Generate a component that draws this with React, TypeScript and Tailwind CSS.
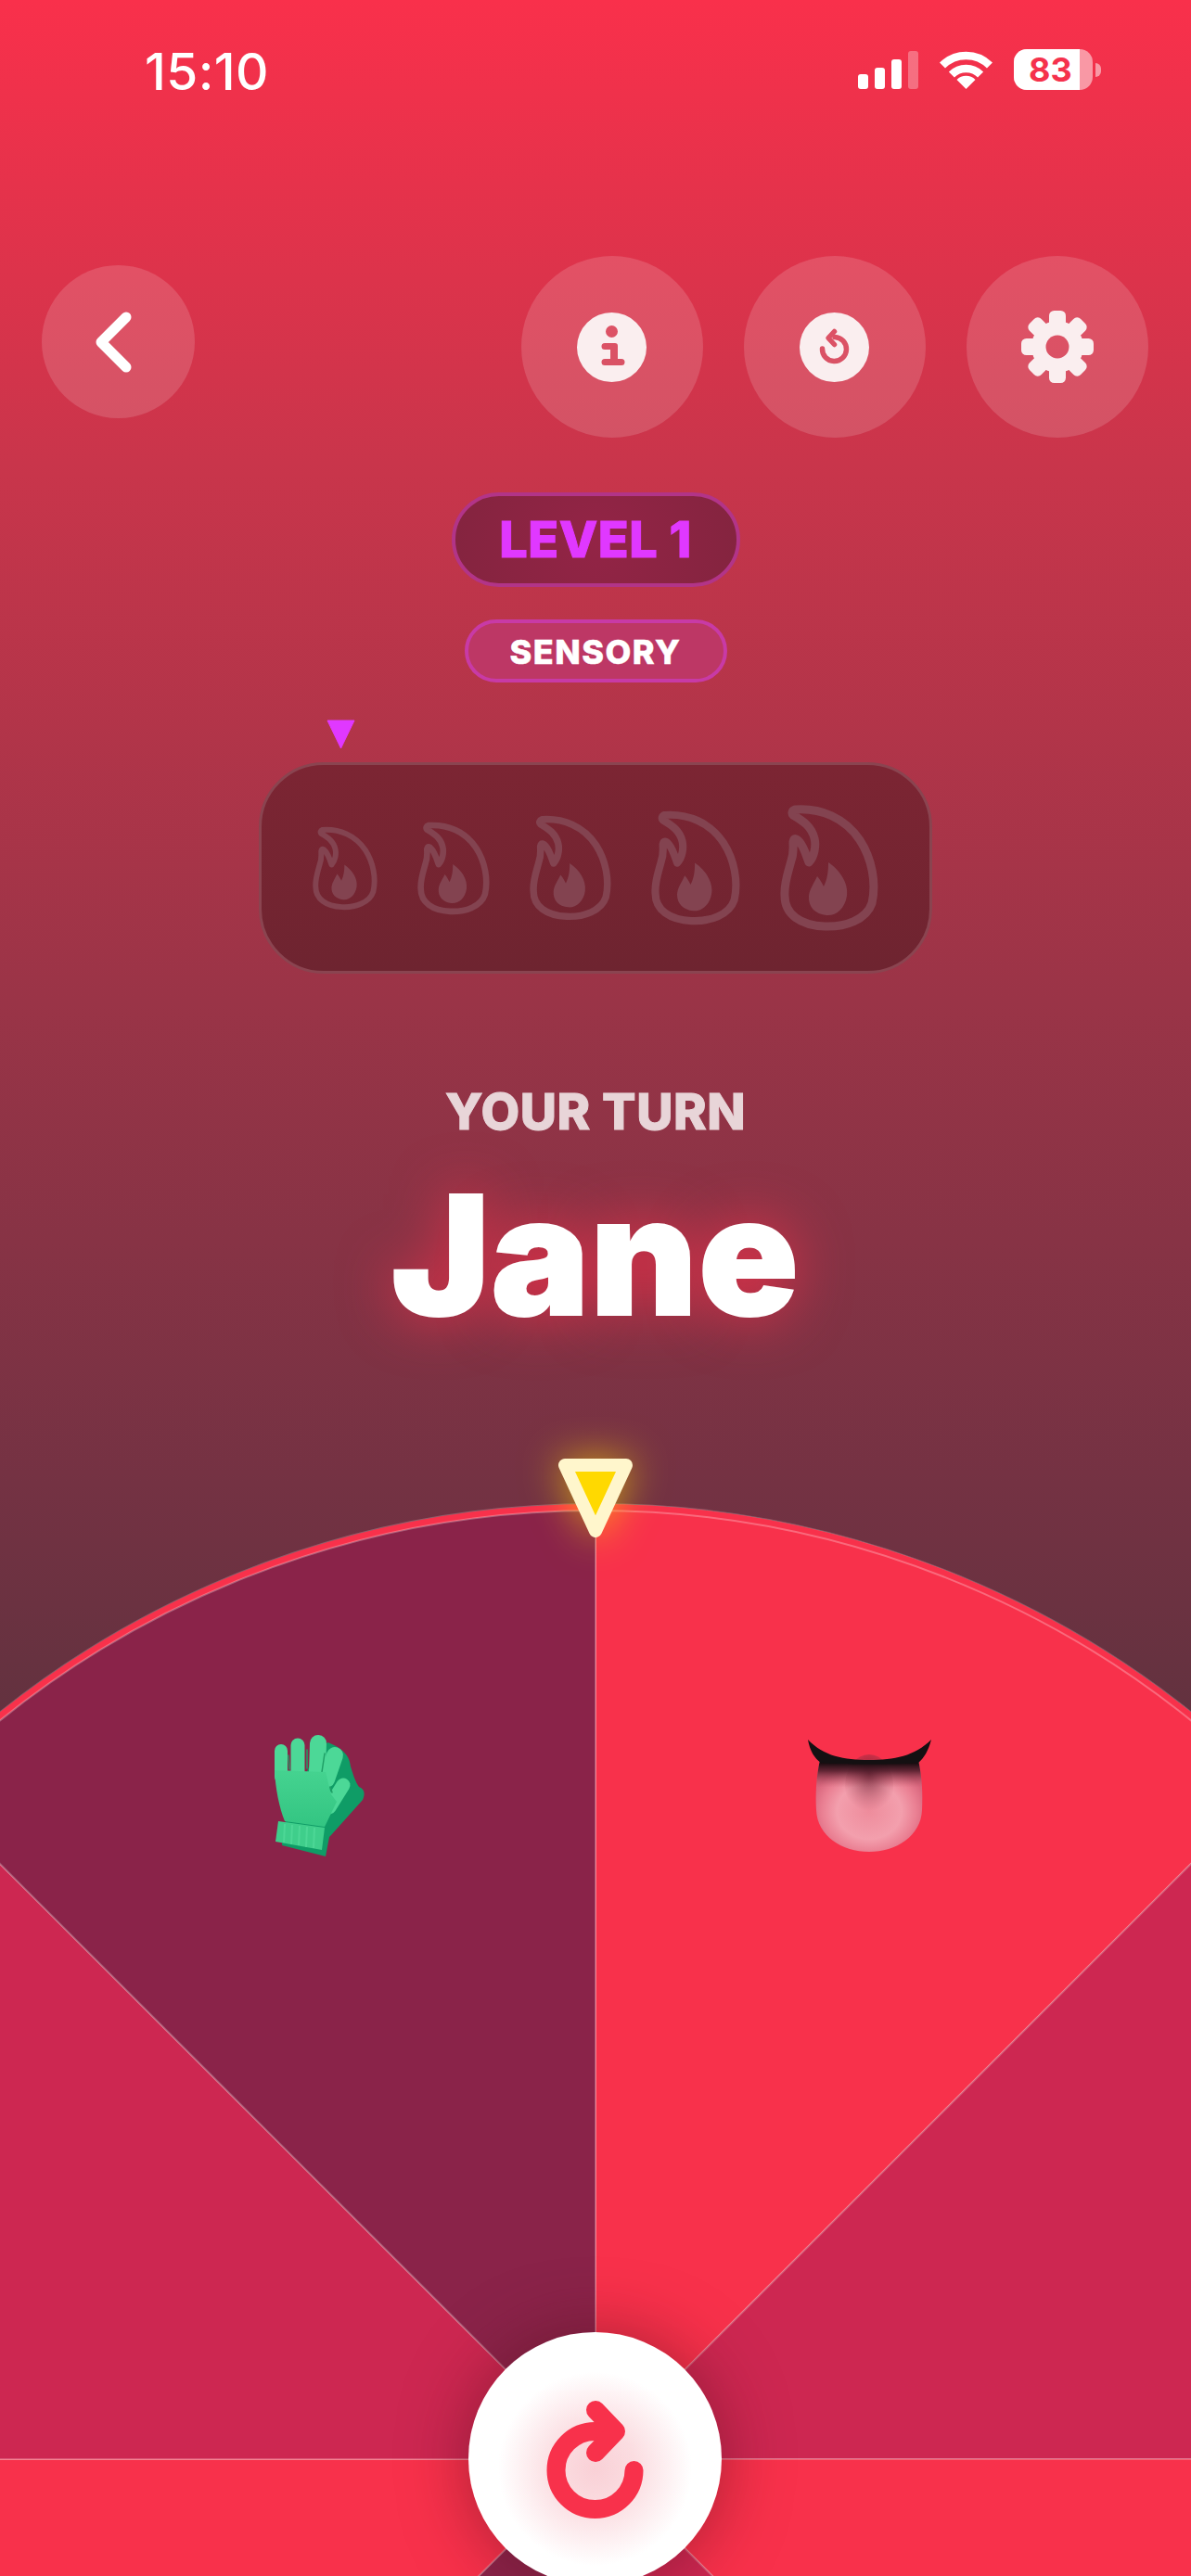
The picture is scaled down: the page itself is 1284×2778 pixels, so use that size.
import { ReactNode } from "react";

const font = "font-['Inter',sans-serif]";

function StatusBar() {
  return (
    <div className="h-[276px] pl-[156px] pr-[97px] pt-[46px] flex items-start justify-between text-white">
      <span className={`${font} font-medium text-[55px] leading-[62px] tracking-[0.4px]`}>15:10</span>
      <div className="flex items-start pt-[9px]">
        {/* signal */}
        <div className="flex items-end gap-[7px] h-[41px]">
          <div className="w-[11px] h-[16px] rounded-[3px] bg-white" />
          <div className="w-[11px] h-[23px] rounded-[3px] bg-white" />
          <div className="w-[11px] h-[32px] rounded-[3px] bg-white" />
          <div className="w-[11px] h-[41px] rounded-[3px] bg-white/30" />
        </div>
        {/* wifi */}
        <svg width="57" height="41" viewBox="0 0 57 41" className="ml-[23px]" fill="none" stroke="white" strokeWidth="8.5">
          <path d="M3 15.5 A36 36 0 0 1 54 15.5" />
          <path d="M12.9 25.6 A22 22 0 0 1 44.1 25.6" />
          <path d="M28.5 41 L18.5 31 A14 14 0 0 1 38.5 31 Z" fill="white" stroke="none" />
        </svg>
        {/* battery */}
        <div className="relative ml-[23px] -mt-[2px] w-[85px] h-[44px] rounded-[14px] bg-white/50 overflow-hidden">
          <div className="absolute left-0 top-0 bottom-0 w-[71px] bg-white" />
          <span className={`${font} absolute left-[16px] top-0 font-bold text-[36px] leading-[44px] text-[#f5314c]`}>83</span>
        </div>
        <div className="ml-[3px] mt-[13px] w-[6px] h-[15px] rounded-r-full bg-white/50" />
      </div>
    </div>
  );
}

function RoundButton({ children }: { children: ReactNode }) {
  return (
    <button className="w-[196px] h-[196px] rounded-full bg-white/15 flex items-center justify-center">
      {children}
    </button>
  );
}

function InfoIcon() {
  return (
    <svg width="75" height="75" viewBox="0 0 75 75" className="-ml-[2px]">
      <path
        fillRule="evenodd"
        fill="#faeeef"
        d="M37.5 0a37.5 37.5 0 1 0 0 75a37.5 37.5 0 1 0 0-75Z M37.5 14a6.5 6.5 0 1 1 0 13a6.5 6.5 0 1 1 0-13Z M30 33h11a3 3 0 0 1 3 3v14h4a3.5 3.5 0 0 1 0 7H30a3.5 3.5 0 0 1 0-7h6v-10h-6a3.5 3.5 0 0 1 0-7Z"
      />
    </svg>
  );
}

function ReplayIcon() {
  return (
    <svg width="75" height="75" viewBox="0 0 75 75" className="-ml-[2px]">
      <mask id="replay-hole">
        <rect width="75" height="75" fill="white" />
        <g fill="none" stroke="black" strokeWidth="5.5" strokeLinecap="round" strokeLinejoin="round">
          <path d="M24.5 39 A13 13 0 1 0 38 26.5" />
          <path d="M37.5 20.5 L31 27.5 L37.5 34.5" />
        </g>
      </mask>
      <circle cx="37.5" cy="37.5" r="37.5" fill="#faeeef" mask="url(#replay-hole)" />
    </svg>
  );
}

function GearIcon() {
  const teeth = [0, 45, 90, 135, 180, 225, 270, 315];
  return (
    <svg width="78" height="78" viewBox="0 0 78 78">
      <mask id="gear-hole">
        <rect width="78" height="78" fill="white" />
        <circle cx="39" cy="39" r="12.5" fill="black" />
      </mask>
      <g fill="#faeeef" mask="url(#gear-hole)">
        <circle cx="39" cy="39" r="28" />
        {teeth.map((a) => (
          <rect key={a} x="30" y="0" width="18" height="24" rx="5.5" transform={`rotate(${a} 39 39)`} />
        ))}
      </g>
    </svg>
  );
}

function Header() {
  return (
    <div className="flex items-start justify-between pl-[45px] pr-[46px]">
      <button className="mt-[10px] w-[165px] h-[165px] rounded-full bg-white/15">
        <svg width="165" height="165" viewBox="0 0 165 165" fill="none" stroke="white" strokeWidth="11" strokeLinecap="round" strokeLinejoin="round">
          <path d="M91 56 L64 83 L91 110" />
        </svg>
      </button>
      <div className="flex gap-[44px]">
        <RoundButton>
          <InfoIcon />
        </RoundButton>
        <RoundButton>
          <ReplayIcon />
        </RoundButton>
        <RoundButton>
          <GearIcon />
        </RoundButton>
      </div>
    </div>
  );
}

function Flame({ w, h }: { w: number; h: number }) {
  return (
    <svg width={w} height={h} viewBox="0 0 106 136" fill="none">
      <path
        d="M16 5 C44 3 70 14 86 38 C99 58 104 84 99 106 C93 124 70 132 48 131 C22 130 5 118 5 98 C4 84 9 72 12 60 C15 52 14 46 14 40 C15 35 18 36 21 40 C26 46 28 54 31 62 C37 56 39 44 37 36 C34 24 26 18 14 11 C12 9 13 6 16 5 Z"
        stroke="#834350"
        strokeWidth="9"
        strokeLinejoin="round"
      />
      <path
        d="M52 62 C64 70 74 84 72 98 C70 112 60 120 50 119 C38 118 30 110 31 98 C32 90 37 84 40 77 C43 80 45 84 47 88 C51 80 52 72 52 62 Z"
        fill="#834350"
      />
    </svg>
  );
}

function Glove() {
  return (
    <g transform="translate(295 271)">
      <defs>
        <linearGradient id="glove-front" x1="0" y1="0" x2="0" y2="1">
          <stop offset="0" stopColor="#45d390" />
          <stop offset="1" stopColor="#33c582" />
        </linearGradient>
      </defs>
      {/* back glove */}
      <path
        d="M58 8 C70 12 82 20 83 34 C86 44 88 50 92 56 C98 58 99 64 96 70 L62 108 L60 110 L56 131 L9 119 L10 100 L40 30 Z"
        fill="#0f9c66"
      />
      {/* fingers */}
      <g stroke="#4cd897" strokeLinecap="round">
        <path d="M8 45 V17" strokeWidth="14" />
        <path d="M26 40 V11" strokeWidth="15" />
        <path d="M47 40 L48 9" strokeWidth="18" />
        <path d="M57 48 L66 22" strokeWidth="18" />
        <path d="M60 78 L75 54" strokeWidth="15" />
      </g>
      <path d="M16 22 L17 37 M36 16 L36 36 M55 20 L52 40 M61 56 L63 62" stroke="#1f9f66" strokeWidth="1.5" strokeLinecap="round" />
      <path d="M1 38 L56 40 L62 64 L68 72 L55 99 L12 93 C6 78 2 58 1 38 Z" fill="url(#glove-front)" />
      {/* cuff */}
      <path d="M5 93 L55 100 L52 124 L2 115 Z" fill="#3fce8b" />
      <path d="M12 96 L11 116 M20 97 L19 118 M28 98 L27 119 M36 99 L35 121 M44 100 L43 122" stroke="#5be0a2" strokeWidth="2" opacity="0.5" />
    </g>
  );
}

function Tongue() {
  const shape = "M14 22 H120 C124 40 125 58 124 76 C123 104 96 121 67 121 C38 121 11 104 10 76 C9 58 10 40 14 22 Z";
  return (
    <g transform="translate(870 276)">
      <defs>
        <radialGradient id="tongue-base" cx="0.5" cy="0.56" r="0.55">
          <stop offset="0" stopColor="#ee8c9c" />
          <stop offset="0.55" stopColor="#f39fad" />
          <stop offset="0.8" stopColor="#ea8093" />
          <stop offset="1" stopColor="#d9667d" />
        </radialGradient>
        <linearGradient id="tongue-dark" x1="0" y1="0" x2="0" y2="1">
          <stop offset="0.03" stopColor="#160b0e" />
          <stop offset="0.12" stopColor="#4d1a28" stopOpacity="0.85" />
          <stop offset="0.3" stopColor="#b04a5f" stopOpacity="0" />
        </linearGradient>
        <radialGradient id="tongue-groove" cx="0.5" cy="0.3" r="0.6">
          <stop offset="0" stopColor="#5c1c2c" stopOpacity="0.8" />
          <stop offset="1" stopColor="#a83e54" stopOpacity="0" />
        </radialGradient>
      </defs>
      <path d={shape} fill="url(#tongue-base)" />
      <ellipse cx="67" cy="50" rx="26" ry="34" fill="url(#tongue-groove)" />
      <path d={shape} fill="url(#tongue-dark)" />
      <path d="M1 0 C18 18 40 22 67 22 C94 22 116 18 134 0 C131 12 126 20 120 25 C104 27 30 27 15 25 C8 20 3 12 1 0 Z" fill="#141012" />
    </g>
  );
}

function Wheel() {
  const cx = 642;
  const cy = 1052;
  const r = 1030;
  const pt = (deg: number) => {
    const a = (deg * Math.PI) / 180;
    return `${(cx + r * Math.sin(a)).toFixed(1)} ${(cy - r * Math.cos(a)).toFixed(1)}`;
  };
  const fills = ["#f8314b", "#cd2751", "#f8314b", "#cd2751", "#8a2349", "#f8314b", "#cd2751", "#8a2349"];

  return (
    <div className="relative mt-auto h-[1178px]">
      <svg width="1284" height="1178" viewBox="0 0 1284 1178" className="block">
        {fills.map((fill, i) => (
          <path
            key={i}
            d={`M${cx} ${cy} L${pt(i * 45)} A${r} ${r} 0 0 1 ${pt((i + 1) * 45)} Z`}
            fill={fill}
            stroke="#ffffff"
            strokeOpacity="0.22"
            strokeWidth="2"
          />
        ))}
        <circle cx={cx} cy={cy} r={r - 3.5} fill="none" stroke="#f8314b" strokeWidth="7" />
        <circle cx={cx} cy={cy} r={r - 7} fill="none" stroke="#ffffff" strokeOpacity="0.28" strokeWidth="2" />
        <Glove />
        <Tongue />
      </svg>

      {/* pointer */}
      <svg
        width="82"
        height="85"
        viewBox="0 0 82 85"
        className="absolute left-[601px] -top-[27px] overflow-visible drop-shadow-[0_0_22px_rgba(255,217,0,0.65)]"
      >
        <path d="M8 7 L74 7 L41 78 Z" fill="#ffd900" stroke="#fff6cc" strokeWidth="14" strokeLinejoin="round" />
      </svg>

      {/* spin button */}
      <button className="absolute left-[505px] top-[915px] w-[273px] h-[273px] rounded-full bg-[radial-gradient(circle_at_50%_54%,#f9d0d6_0%,#fbdde1_22%,#ffffff_52%)] shadow-[0_0_70px_rgba(90,15,30,0.5)]">
        <svg width="273" height="273" viewBox="0 0 273 273" fill="none" stroke="#f8314b" strokeWidth="20" strokeLinecap="round" strokeLinejoin="round">
          <path d="M178.5 149 A42 42 0 1 1 136.5 107" />
          <path d="M137 84 L159 107 L137 130" />
        </svg>
      </button>
    </div>
  );
}

export default function App() {
  return (
    <div className="relative w-[1284px] h-[2778px] overflow-hidden flex flex-col items-stretch bg-[linear-gradient(180deg,#f9304b_0px,#c9354b_500px,#9a3447_1080px,#743243_1600px,#62323f_1860px,#62323f_2778px)]">
      <StatusBar />
      <Header />

      {/* Level */}
      <div className="mt-[59px] self-center w-[311px] h-[102px] rounded-full border-[4px] border-[#b23488] bg-[radial-gradient(circle,#932446_0%,#84243f_100%)] flex items-center justify-center">
        <span className={`${font} font-extrabold text-[54px] leading-none tracking-[0.5px] text-[#e038ff] [-webkit-text-stroke:1px_#e038ff]`}>LEVEL 1</span>
      </div>
      <div className="mt-[35px] self-center w-[283px] h-[68px] rounded-full border-[4px] border-[#c83aa6] bg-[#bd3765] flex items-center justify-center">
        <span className={`${font} font-extrabold text-[36px] leading-none tracking-[1.5px] pt-[2px] text-white [-webkit-text-stroke:0.5px_white]`}>SENSORY</span>
      </div>

      {/* Heat meter */}
      <div className="mt-[40px] self-center w-[726px]">
        <svg width="31" height="31" viewBox="0 0 31 31" className="block ml-[73px]">
          <path d="M1 1 H30 L15.5 31 Z" fill="#e038ff" stroke="#e038ff" strokeWidth="1" strokeLinejoin="round" />
        </svg>
        <div className="mt-[15px] h-[228px] rounded-[70px] border-[3px] border-[#8a4450] bg-[linear-gradient(180deg,#7c2533,#6e2430)] flex items-center justify-center gap-[43px]">
          <Flame w={70} h={91} />
          <Flame w={78} h={103} />
          <Flame w={88} h={114} />
          <Flame w={96} h={124} />
          <Flame w={106} h={136} />
        </div>
      </div>

      {/* Turn */}
      <p className={`${font} mt-[122px] text-center font-extrabold text-[54px] leading-[54px] tracking-[0.5px] text-[#e8d5d8] [-webkit-text-stroke:1px_#e8d5d8]`}>YOUR TURN</p>
      <p className={`${font} mt-[38px] text-center font-black text-[178px] leading-[180px] tracking-[1px] text-white [-webkit-text-stroke:2px_white] [text-shadow:0_0_60px_rgba(248,49,75,0.85)]`}>Jane</p>

      <Wheel />
    </div>
  );
}
